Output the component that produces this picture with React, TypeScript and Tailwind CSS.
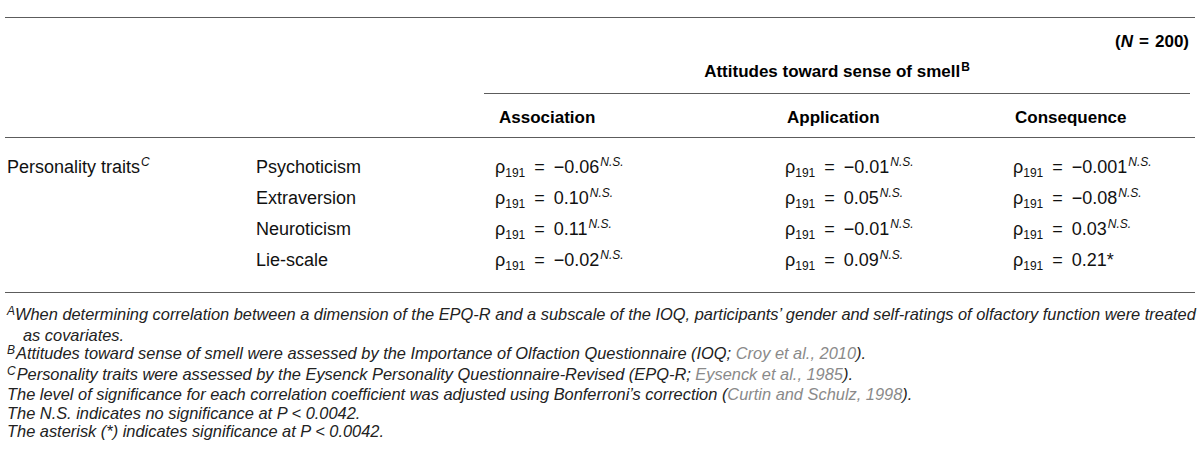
import React from "react";

const font = { fontFamily: '"Liberation Sans", Arial, sans-serif' };

function Rho({ v, sup, star }: { v: string; sup?: boolean; star?: boolean }) {
  return (
    <span className="whitespace-nowrap">
      <span>ρ</span>
      <span className="text-[12px] relative top-[4px]">191</span>
      <span className="mx-[9px]">=</span>
      <span>{v}</span>
      {sup && <span className="text-[12px] italic relative top-[-7px] ml-[1px]">N.S.</span>}
      {star && <span>*</span>}
    </span>
  );
}

const rows: { name: string; a: [string, boolean]; b: [string, boolean]; c: [string, boolean] }[] = [
  { name: "Psychoticism", a: ["−0.06", true], b: ["−0.01", true], c: ["−0.001", true] },
  { name: "Extraversion", a: ["0.10", true], b: ["0.05", true], c: ["−0.08", true] },
  { name: "Neuroticism", a: ["0.11", true], b: ["−0.01", true], c: ["0.03", true] },
  { name: "Lie-scale", a: ["−0.02", true], b: ["0.09", true], c: ["0.21", false] },
];

export default function App() {
  return (
    <div className="w-[1200px] h-[455px] bg-white text-black pt-[17px] px-[5px]" style={font}>
      <div className="border-t border-[#5c5c5c]">
        <div className="pt-[14px] leading-[20px] text-[17px] font-bold text-right pr-[6px]">
          (<span className="italic">N</span>
          <span className="mx-[6px]">=</span>200)
        </div>
        <div className="flex">
          <div className="w-[479px]" />
          <div className="flex-1 mr-[5px] border-b border-[#5c5c5c] pt-[10px] pb-[10px] leading-[20px] text-[17px] font-bold text-center">
            Attitudes toward sense of smell<span className="text-[12px] relative top-[-6px] ml-[1px]">B</span>
          </div>
        </div>
        <div className="flex border-b border-[#5c5c5c] pt-[14px] pb-[9px] leading-[20px] text-[17px] font-bold">
          <div className="w-[494px]" />
          <div className="w-[288px]">Association</div>
          <div className="w-[228px]">Application</div>
          <div>Consequence</div>
        </div>
        <div className="border-b border-[#5c5c5c] pt-[14px] pb-[16px] text-[18px] text-[#111]">
          {rows.map((r, i) => (
            <div key={r.name} className="flex h-[31px] items-center">
              <div className="w-[251px] pl-[2px]">
                {i === 0 && (
                  <>
                    Personality traits
                    <span className="text-[12px] italic relative top-[-7px] ml-[1px]">C</span>
                  </>
                )}
              </div>
              <div className="w-[239px]">{r.name}</div>
              <div className="w-[290px]">
                <Rho v={r.a[0]} sup={r.a[1]} />
              </div>
              <div className="w-[228px]">
                <Rho v={r.b[0]} sup={r.b[1]} />
              </div>
              <div>
                <Rho v={r.c[0]} sup={r.c[1]} star={!r.c[1]} />
              </div>
            </div>
          ))}
        </div>
        <div className="pt-[12px] pl-[2px] text-[16.4px] leading-[18.5px] italic text-[#222]">
          <div className="whitespace-nowrap">
            <span className="text-[12px] relative top-[-5px]">A</span>
            When determining correlation between a dimension of the EPQ-R and a subscale of the IOQ, participants’ gender and self-ratings of olfactory function were treated
          </div>
          <div className="pl-[16px]">as covariates.</div>
          <div>
            <span className="text-[12px] relative top-[-5px] mr-[1px]">B</span>
            Attitudes toward sense of smell were assessed by the Importance of Olfaction Questionnaire (IOQ;{" "}
            <span className="text-[#8a8a8a]">Croy et al., 2010</span>).
          </div>
          <div>
            <span className="text-[12px] relative top-[-5px] mr-[1px]">C</span>
            Personality traits were assessed by the Eysenck Personality Questionnaire-Revised (EPQ-R;{" "}
            <span className="text-[#8a8a8a]">Eysenck et al., 1985</span>).
          </div>
          <div>
            The level of significance for each correlation coefficient was adjusted using Bonferroni’s correction (
            <span className="text-[#8a8a8a]">Curtin and Schulz, 1998</span>).
          </div>
          <div>The N.S. indicates no significance at P &lt; 0.0042.</div>
          <div>The asterisk (*) indicates significance at P &lt; 0.0042.</div>
        </div>
      </div>
    </div>
  );
}
